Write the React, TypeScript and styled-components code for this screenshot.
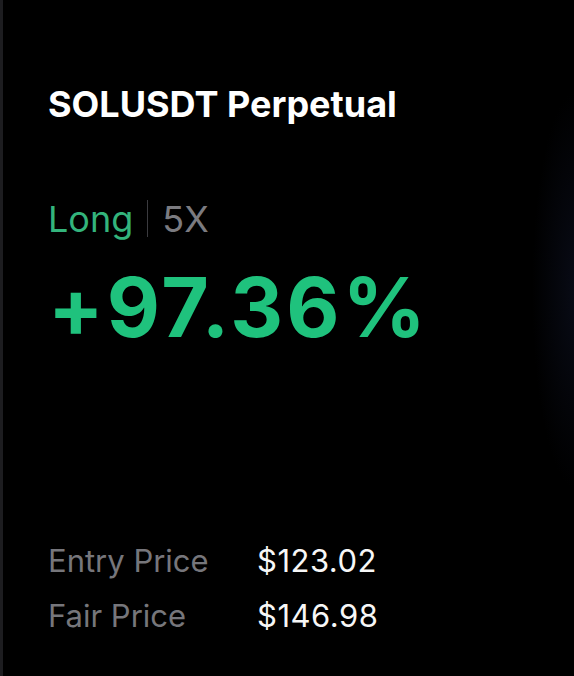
import React from "react";
import styled, { createGlobalStyle } from "styled-components";

const GlobalStyle = createGlobalStyle`
  html, body {
    margin: 0;
    padding: 0;
    background: #000;
  }
`;

const Card = styled.div`
  box-sizing: border-box;
  width: 574px;
  height: 676px;
  padding: 86px 0 0 45px;
  border-left: 3px solid #1d1d20;
  background: radial-gradient(
      ellipse 45px 200px at 574px 290px,
      rgba(10, 13, 26, 0.85),
      rgba(0, 0, 0, 0) 100%
    ),
    #000;
  font-family: Inter, "Noto Sans", sans-serif;
  display: flex;
  flex-direction: column;
  overflow: hidden;
`;

const Title = styled.div`
  font-size: 36px;
  line-height: 36px;
  font-weight: 700;
  color: #fff;
`;

const SideRow = styled.div`
  margin-top: 78px;
  display: flex;
  align-items: center;
  font-size: 36px;
  line-height: 36px;
`;

const Side = styled.span<{ $tone: "long" | "muted" }>`
  color: ${({ $tone }) => ($tone === "long" ? "#33b47c" : "#7b7b80")};
`;

const Divider = styled.span`
  width: 1px;
  height: 37px;
  margin: 0 14px 0 14px;
  background: #3b3b3f;
`;

const Pnl = styled.div`
  margin-top: 30px;
  font-size: 82px;
  line-height: 82px;
  font-weight: 700;
  color: #1fc27d;
  letter-spacing: 3px;
`;

const Prices = styled.div`
  margin-top: 196px;
  display: grid;
  grid-template-columns: 209px auto;
  row-gap: 24px;
  font-size: 31px;
  line-height: 31px;
`;

const Label = styled.span`
  color: #76767b;
`;

const Value = styled.span`
  color: #f7f7f7;
  letter-spacing: 0.5px;
`;

const rows = [
  { label: "Entry Price", value: "$123.02" },
  { label: "Fair Price", value: "$146.98" },
];

export default function App() {
  return (
    <>
      <GlobalStyle />
      <Card>
        <Title>SOLUSDT Perpetual</Title>
        <SideRow>
          <Side $tone="long">Long</Side>
          <Divider />
          <Side $tone="muted">5X</Side>
        </SideRow>
        <Pnl>+97.36%</Pnl>
        <Prices>
          {rows.map((row) => (
            <React.Fragment key={row.label}>
              <Label>{row.label}</Label>
              <Value>{row.value}</Value>
            </React.Fragment>
          ))}
        </Prices>
      </Card>
    </>
  );
}
